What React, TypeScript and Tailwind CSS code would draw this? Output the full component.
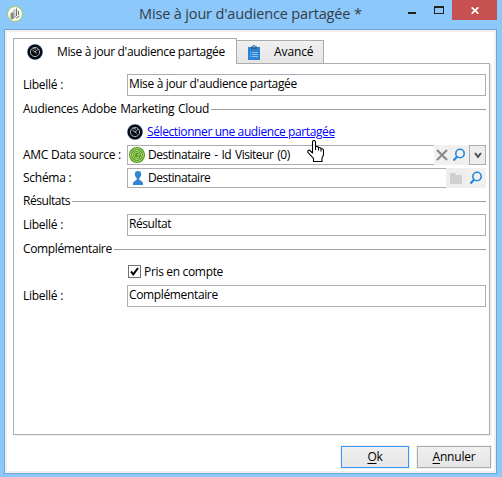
import type { ReactNode } from "react";

function Radar({ green = false }: { green?: boolean }) {
  return green ? (
    <svg width="16" height="16" viewBox="0 0 16 16" className="block shrink-0">
      <circle cx="8" cy="8" r="8" fill="#4f9a10" />
      <g fill="none" stroke="#d5eab8" strokeWidth="0.8">
        <circle cx="8" cy="8" r="6.4" />
        <circle cx="8" cy="8" r="4.5" />
        <path d="M10 9.8A2.7 2.7 0 1 1 10.7 7.8L8 8" />
      </g>
    </svg>
  ) : (
    <svg width="16" height="16" viewBox="0 0 16 16" className="block shrink-0">
      <circle cx="8" cy="8" r="8" fill="#86b4e8" />
      <circle cx="8" cy="8" r="7.5" fill="#080b12" />
      <g fill="none" stroke="#b9bcc2" strokeWidth="0.9">
        <circle cx="8" cy="8" r="4.6" />
        <path d="M11 5.200L8 8L5.400 6M8 8l1.800 1.200M6 4.500l3 .6" />
      </g>
    </svg>
  );
}

function Magnifier() {
  return (
    <svg width="14" height="14" viewBox="0 0 14 14" className="block">
      <circle cx="8" cy="5.5" r="4.2" fill="none" stroke="#2787dc" strokeWidth="1.6" />
      <path d="M5 8.8L1.5 12.5" stroke="#2787dc" strokeWidth="2.2" />
    </svg>
  );
}

function Person() {
  return (
    <svg width="10" height="14" viewBox="0 0 10 14" className="mr-[3px] ml-[3px] block shrink-0">
      <path d="M5 0a3.2 3.2 0 0 1 3.2 3.2C8.2 5 7.3 6.4 6.3 7v1.7L9 10.5q1 .6 1 1.7V14H0v-1.8q0-1.1 1-1.7l2.7-1.8V7C2.700 6.400 1.800 5 1.800 3.200A3.200 3.200 0 0 1 5 0Z" fill="#3286d2" />
    </svg>
  );
}

function Clipboard() {
  return (
    <svg width="12" height="16" viewBox="0 0 12 16" className="block">
      <path d="M0 3h12v13H0z" fill="#2b83d4" />
      <path d="M3 5V2.500h1.500a1.500 1.500 0 0 1 3 0H9V5Z" fill="#2564a0" />
      <path d="M5.500 2h1v1.200h-1z" fill="white" />
      <path d="M2 8.500h1M4 8.500h6M2 10.500h1M4 10.500h6M2 12.500h1M4 12.500h6" stroke="#a7d0f3" strokeWidth="0.8" />
    </svg>
  );
}

function Label({ children }: { children: ReactNode }) {
  return <span className="w-[104px] shrink-0 tracking-[-0.27px]">{children}</span>;
}

function TextRow({ value, className, tracking }: { value: string; className: string; tracking: string }) {
  return (
    <div className={`flex h-[22px] items-center ${className}`}>
      <Label>Libellé :</Label>
      <div className={`flex h-[22px] flex-1 items-center border border-[#abadb3] bg-white pl-px pb-[3px] ${tracking}`}>{value}</div>
    </div>
  );
}

function Section({ title, className, tracking }: { title: string; className: string; tracking: string }) {
  return (
    <div className={`flex h-4 items-center ${className}`}>
      <span className={tracking}>{title}</span>
      <span className="ml-[2px] h-px flex-1 bg-[#9d9d9d]" />
    </div>
  );
}

export default function App() {
  return (
    <div className="relative flex h-[477px] w-[502px] flex-col bg-[#8dc8fb] font-['Open_Sans','Noto_Sans',sans-serif] text-[12px] leading-4 whitespace-nowrap text-black">
      <header className="flex h-[29px] shrink-0 items-start">
        <svg width="16" height="16" viewBox="0 0 16 16" className="mt-[6px] ml-[7px] block shrink-0">
          <circle cx="8" cy="8" r="7.500" fill="#f7f9f4" stroke="#a7c65b" />
          <path d="M3.500 7.500l2-1.500 1.500 1v5.500l-2 1-1.500-1Z" fill="#858b82" />
          <path d="M5.500 4.500l3-1.500v8l-1.800 1V6Z" fill="#c3c7bf" />
          <path d="M9.500 2.500v7.500M8 10.500l1.500 1.500 3-2M11.500 5v4" fill="none" stroke="#676d63" />
        </svg>
        <h1 className="ml-[116px] w-[264px] pt-1 text-[14.5px] leading-[20px] tracking-[-0.15px] text-[#333d48]">Mise à jour d'audience partagée *</h1>
        <div className="mt-3 ml-[5px] h-[2px] w-2 bg-[#222]" />
        <div className="mt-[6px] ml-[18px] h-2 w-[10px] border border-t-2 border-[#222]" />
        <div className="ml-2 flex h-5 w-[45px] items-center justify-center bg-[#c75050]">
          <svg width="8" height="7" viewBox="0 0 8 7"><path d="M.7.300L7.300 6.700M7.300.300L.7 6.700" stroke="white" strokeWidth="1.700" /></svg>
        </div>
      </header>

      <main className="ml-1 flex h-[445px] w-[493px] flex-col border border-[#70a7d8] bg-white">
        <div className="flex h-[443px] flex-col border-2 border-[#f0f0f0] pt-[6px] pl-[6px]">
          <nav className="flex h-[25px] w-[477px] shrink-0 items-end">
            <div className="relative z-10 flex h-[26px] w-[224px] shrink-0 items-center self-start border border-b-0 border-[#acacac] bg-white pl-[13px]">
              <Radar />
              <span className="ml-[14px] tracking-[-0.35px]">Mise à jour d'audience partagée</span>
            </div>
            <div className="flex h-[23px] w-[87px] shrink-0 items-center border border-b-0 border-l-0 border-[#acacac] bg-linear-to-b from-[#f0f0f0] to-[#e5e5e5] pl-[11px]">
              <Clipboard />
              <span className="ml-[14px] tracking-[-0.1px]">Avancé</span>
            </div>
          </nav>

          <section className="h-[372px] w-[477px] shrink-0 border border-[#acacac] bg-white pr-[3px] pl-[9px] shadow-[2px_1px_0_#f0f0f0]">
            <TextRow className="mt-[10px]" value="Mise à jour d'audience partagée" tracking="tracking-[-0.35px]" />
            <Section className="mt-[5px]" title="Audiences Adobe Marketing Cloud" tracking="w-[186px] tracking-[-0.28px] [word-spacing:0.8px]" />
            <div className="mt-[7px] ml-[104px] flex h-4 items-center">
              <Radar />
              <a className="ml-1 tracking-[-0.4px] text-[#0000ff] underline">Sélectionner une audience partagée</a>
            </div>
            <div className="mt-[5px] flex h-5 items-center">
              <Label>AMC Data source :</Label>
              <div className="flex h-5 w-[307px] shrink-0 items-center border border-r-0 border-[#abadb3] pl-px">
                <Radar green />
                <span className="ml-[3px] pb-px tracking-[-0.48px] [word-spacing:1.2px]">Destinataire - Id Visiteur (0)</span>
              </div>
              <div className="flex h-5 w-[35px] items-center bg-[#f0f0f0] pl-[2px]">
                <svg width="12" height="12" viewBox="0 0 12 12"><path d="M1 1l10 10M11 1L1 11" stroke="#8b8b8b" strokeWidth="2.200" /></svg>
                <span className="ml-1"><Magnifier /></span>
              </div>
              <div className="flex h-5 w-[17px] items-center justify-center border border-[#acacac] bg-[#ededed]">
                <svg width="8" height="7" viewBox="0 0 8 7"><path d="M1 1l3 3.800L7 1" fill="none" stroke="#505050" strokeWidth="2" /></svg>
              </div>
            </div>
            <div className="mt-[3px] flex h-5 items-center">
              <Label>Schéma :</Label>
              <div className="flex h-5 w-[319px] shrink-0 items-center border border-r-0 border-[#abadb3] pl-[2px]">
                <Person />
                <span className="ml-[2px] pb-px tracking-[-0.48px]">Destinataire</span>
              </div>
              <div className="flex h-5 w-5 items-center bg-[#eeeeee] pl-1">
                <svg width="12" height="12" viewBox="0 0 12 12"><path d="M0 1h5l1 2h6v9H0z" fill="#d0d0d0" /></svg>
              </div>
              <div className="flex h-5 w-5 items-center justify-center bg-[#f0f0f0]"><Magnifier /></div>
            </div>
            <Section className="mt-[5px]" title="Résultats" tracking="w-[47px] tracking-[-0.45px]" />
            <TextRow className="mt-[5px]" value="Résultat" tracking="tracking-[-0.42px]" />
            <Section className="mt-[5px]" title="Complémentaire" tracking="w-[89px] tracking-[-0.36px]" />
            <div className="mt-2 ml-[105px] flex h-[13px] items-center">
              <div className="flex h-[13px] w-[13px] items-center justify-center border border-[#707070]">
                <svg width="9" height="9" viewBox="0 0 9 9"><path d="M1 4.500l2.300 2.800L8 1" fill="none" stroke="black" strokeWidth="2" /></svg>
              </div>
              <span className="ml-[3px] tracking-[-0.33px]">Pris en compte</span>
            </div>
            <TextRow className="mt-[7px]" value="Complémentaire" tracking="tracking-[-0.36px]" />
          </section>

          <footer className="mt-[11px] ml-[328px] flex h-[22px] gap-2 tracking-[-0.2px]">
            <button className="h-[22px] w-[68px] border border-[#3399ff] bg-linear-to-b from-[#f0f0f0] to-[#e5e5e5] shadow-[0_0_0_1px_#f0f0f0]"><span className="underline underline-offset-2">O</span>k</button>
            <button className="h-[22px] w-[74px] border border-[#acacac] bg-linear-to-b from-[#f0f0f0] to-[#e5e5e5] shadow-[0_0_0_1px_#f0f0f0]"><span className="underline underline-offset-2">A</span>nnuler</button>
          </footer>
        </div>
      </main>

      <svg width="18" height="22" viewBox="0 0 18 22" className="absolute top-[140px] left-[307px]">
        <path d="M5.500 13.500V2q0-1.500 1.500-1.500T8.500 2v5.500M8.500 10V6.500q2.500-.5 3 1V10.500M11.500 7.500q2.500-.3 2.500 1.500V11.500M14 8.500q2.500 0 2.500 2V14q0 2-1.500 4v3.500H6.500V18.500L1 12.500q-.5-2.500 1.500-2.500L5.500 13" fill="white" stroke="black" strokeWidth="1.100" />
      </svg>
    </div>
  );
}
